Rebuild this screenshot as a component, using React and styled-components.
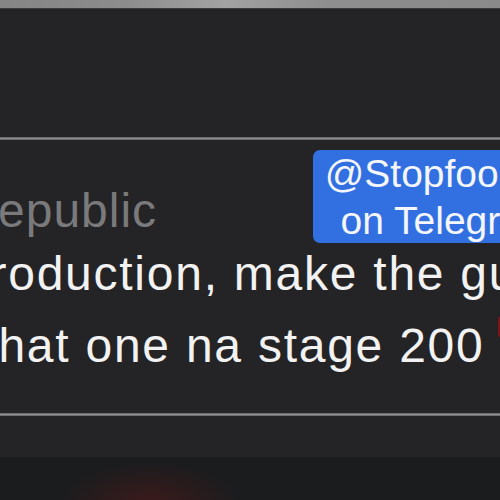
import styled, { createGlobalStyle } from 'styled-components';

const GlobalStyle = createGlobalStyle`
  html, body {
    margin: 0;
    padding: 0;
    background: #242426;
    overflow: hidden;
  }
  body {
    font-family: "Liberation Sans", Arial, sans-serif;
  }
`;

const Screen = styled.div`
  width: 500px;
  height: 500px;
  display: flex;
  flex-direction: column;
  background: #242426;
  overflow: hidden;
`;

const TopBar = styled.div`
  height: 8px;
  flex-shrink: 0;
  background: linear-gradient(90deg, #858585 0%, #8c8c8c 25%, #a2a2a2 45%, #8e8e8e 65%, #8a8a8a 100%);
  border-bottom: 1px solid #3a3a3c;
`;

const Spacer = styled.div`
  height: ${props => props.h}px;
  flex-shrink: 0;
`;

const Divider = styled.div`
  height: 3px;
  flex-shrink: 0;
  background: linear-gradient(180deg, #5c5c5e 0%, #8f8f91 50%, #5c5c5e 100%);
`;

const Card = styled.div`
  height: 273px;
  flex-shrink: 0;
  display: flex;
  flex-direction: column;
  margin-left: -22px;
  padding-top: 10px;
  box-sizing: border-box;
`;

const HeaderRow = styled.div`
  display: flex;
  align-items: flex-end;
  justify-content: space-between;
  white-space: nowrap;
`;

const Name = styled.div`
  margin-left: 3px;
  font-size: 48px;
  line-height: 56px;
  letter-spacing: 1px;
  color: #7a7a7c;
  padding-bottom: 4px;
`;

const Tag = styled.div`
  width: 269px;
  height: 93px;
  margin-right: -82px;
  background: #3270e2;
  border-radius: 7px;
  color: #f4f6fb;
  font-size: 39px;
  line-height: 47px;
  text-align: center;
  white-space: nowrap;
`;

const Message = styled.div`
  margin-top: -5px;
  margin-left: -16px;
  font-size: 48px;
  line-height: 72px;
  letter-spacing: 1.75px;
  color: #f2f2f2;
  white-space: nowrap;
`;

const Emoji = styled.span`
  display: inline-block;
  width: 30px;
  height: 22px;
  margin-left: 14px;
  vertical-align: 24px;
  background: #7c1616;
  border-radius: 4px;
`;

const Footer = styled.div`
  height: 41px;
  flex-shrink: 0;
`;

const Bottom = styled.div`
  flex: 1;
  background:
    radial-gradient(ellipse 90px 40px at 150px 45px, rgba(90, 25, 25, 0.5), rgba(90, 25, 25, 0) 100%),
    #1b1c1e;
`;

export default function App() {
  return (
    <>
      <GlobalStyle />
      <Screen>
        <TopBar />
        <Spacer h={128} />
        <Divider />
        <Card>
          <HeaderRow>
            <Name>republic</Name>
            <Tag>
              @Stopfoodies
              <br />
              on Telegram
            </Tag>
          </HeaderRow>
          <Message>
            production, make the guys
            <br />
            what one na stage 200<Emoji />
          </Message>
        </Card>
        <Divider />
        <Footer />
        <Bottom />
      </Screen>
    </>
  );
}
